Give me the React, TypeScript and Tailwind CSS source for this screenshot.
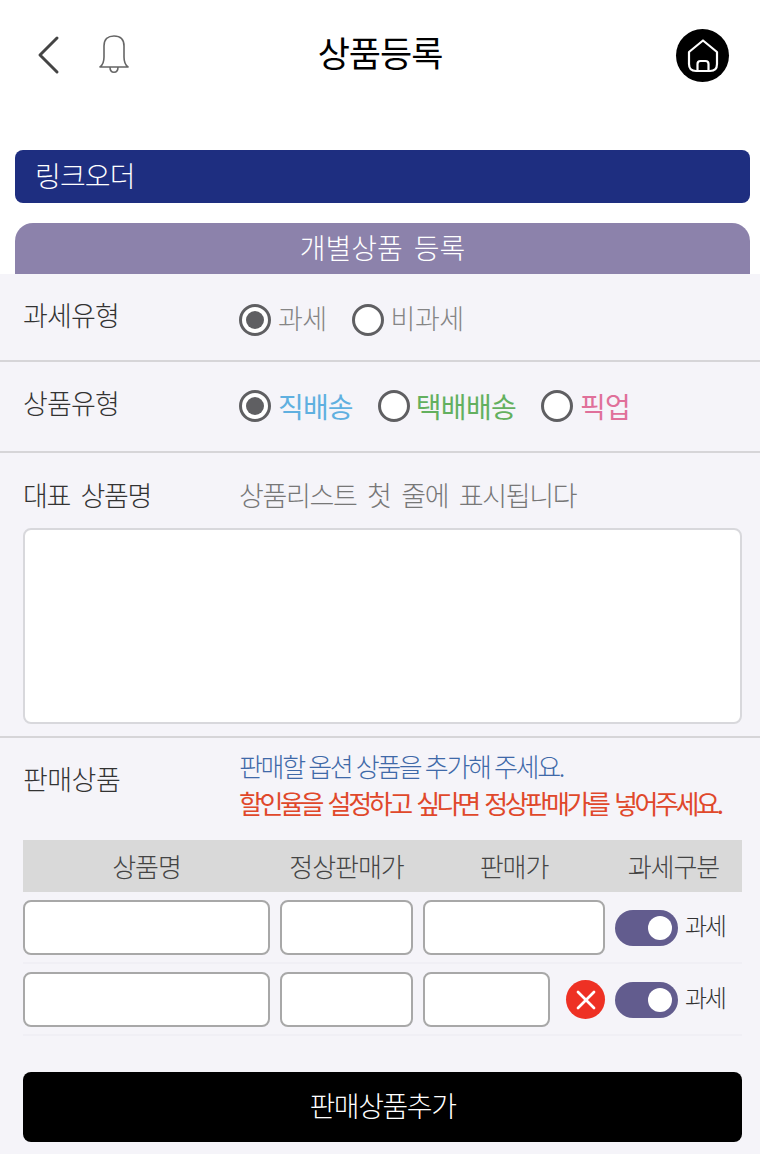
import { X } from 'lucide-react'

const font = "font-['Noto_Sans_CJK_KR','Noto_Sans',sans-serif]"

function Radio({ checked }: { checked?: boolean }) {
  return (
    <span className="flex h-8 w-8 shrink-0 items-center justify-center rounded-full border-[3px] border-[#5f5f62] bg-white">
      {checked && <span className="h-[18px] w-[18px] rounded-full bg-[#5f5f62]" />}
    </span>
  )
}

function Field({ className }: { className: string }) {
  return <div className={`h-[55px] shrink-0 rounded-lg border-2 border-[#a8a8a8] bg-white ${className}`} />
}

function TaxToggle() {
  return (
    <div className="flex items-center">
      <div className="flex h-9 w-[63px] items-center justify-end rounded-full bg-[#625c8e] pr-[6px]">
        <span className="h-6 w-6 rounded-full bg-white" />
      </div>
      <span className="mb-[5px] ml-[7px] text-[24px] font-light tracking-[-0.1em] text-[#333]">과세</span>
    </div>
  )
}

export default function App() {
  return (
    <div className={`${font} h-[1154px] w-[760px] overflow-hidden bg-white`}>
      <header className="relative flex h-[150px] items-start justify-center pt-[28px]">
        <svg viewBox="0 0 24 40" className="absolute left-[36px] top-[35px] h-[40px] w-[24px]" fill="none" stroke="#444" strokeWidth="3" strokeLinecap="round" strokeLinejoin="round">
          <path d="M21 3 L4 20 L21 37" />
        </svg>
        <svg viewBox="0 0 34 40" className="absolute left-[97px] top-[34px] h-[40px] w-[34px]" fill="none" stroke="#666" strokeWidth="1.6" strokeLinejoin="round">
          <path d="M3 33 Q7 30 7 23 V12 C7 5 11 2 17 2 C23 2 27 5 27 12 V23 Q27 30 31 33 Z" />
          <path d="M13 33 C13 40 21 40 21 33" />
        </svg>
        <h1 className="text-[35px] leading-[48px] font-normal tracking-[-0.03em] text-black">상품등록</h1>
        <div className="absolute left-[676px] top-[29px] flex h-[53px] w-[53px] items-center justify-center rounded-full bg-black">
          <svg viewBox="0 0 34 34" className="h-[34px] w-[34px]" fill="none" stroke="white" strokeWidth="2.2" strokeLinejoin="round">
            <path d="M17 1.5 L31 13 V25 Q31 32 24 32 H10 Q3 32 3 25 V13 Z" />
            <path d="M11.5 32 V25 Q11.5 22 14.5 22 H19.5 Q22.5 22 22.5 25 V32" />
          </svg>
        </div>
      </header>

      <div className="ml-[15px] mr-[10px] flex h-[53px] items-center rounded-lg bg-[#1e2e80] pb-[4px] pl-[20px]">
        <span className="text-[28px] font-light tracking-[-0.03em] text-white">링크오더</span>
      </div>

      <div className="ml-[15px] mr-[10px] mt-[20px] flex h-[51px] items-center justify-center rounded-t-[18px] bg-[#8c82ab] pb-[4px]">
        <span className="text-[28px] font-light [word-spacing:5px] text-white">개별상품 등록</span>
      </div>

      <div className="h-[880px] bg-[#f5f4f9]">
        <section className="flex h-[88px] items-start border-b-2 border-[#d6d5d8] pl-[23px] pt-[22px]">
          <span className="w-[216px] text-[27px] leading-[38px] font-light tracking-[-0.03em] text-[#333]">과세유형</span>
          <div className="flex items-center pt-[3px]">
            <Radio checked />
            <span className="mb-[3px] ml-[7px] text-[27px] leading-[38px] font-light tracking-[-0.02em] text-[#858585]">과세</span>
            <span className="ml-[25px]"><Radio /></span>
            <span className="mb-[3px] ml-[7px] text-[27px] leading-[38px] font-light tracking-[-0.02em] text-[#858585]">비과세</span>
          </div>
        </section>

        <section className="flex h-[91px] items-start border-b-2 border-[#d6d5d8] pl-[23px] pt-[22px]">
          <span className="w-[216px] text-[27px] leading-[38px] font-light tracking-[-0.03em] text-[#333]">상품유형</span>
          <div className="flex items-center pt-[3px]">
            <Radio checked />
            <span className="ml-[7px] text-[28px] leading-[38px] font-normal tracking-[-0.03em] text-[#5fb0e0]">직배송</span>
            <span className="ml-[25px]"><Radio /></span>
            <span className="ml-[6px] text-[28px] leading-[38px] font-normal tracking-[-0.025em] text-[#63b05f]">택배배송</span>
            <span className="ml-[25px]"><Radio /></span>
            <span className="ml-[7px] text-[28px] leading-[38px] font-normal tracking-[-0.03em] text-[#e0709a]">픽업</span>
          </div>
        </section>

        <section className="h-[285px] border-b-2 border-[#d6d5d8] pl-[23px] pr-[18px] pt-[23px]">
          <div className="flex">
            <span className="w-[216px] text-[27px] leading-[38px] font-light tracking-[-0.05em] [word-spacing:6px] text-[#333]">대표 상품명</span>
            <span className="text-[27px] leading-[38px] font-light tracking-[-0.05em] [word-spacing:6px] text-[#777]">상품리스트 첫 줄에 표시됩니다</span>
          </div>
          <div className="mt-[14px] h-[196px] rounded-lg border-2 border-[#d8d8dc] bg-white" />
        </section>

        <section className="pl-[23px] pr-[18px]">
          <div className="flex h-[102px] items-start">
            <span className="mt-[22px] w-[216px] text-[27px] leading-[38px] font-light tracking-[-0.02em] text-[#333]">판매상품</span>
            <div className="pt-[9px]">
              <p className="whitespace-nowrap text-[26px] leading-[38px] font-light tracking-[-0.09em] [word-spacing:1px] text-[#3f69a8]">판매할 옵션 상품을 추가해 주세요.</p>
              <p className="whitespace-nowrap text-[26px] leading-[36px] font-normal tracking-[-0.13em] [word-spacing:4px] text-[#e0482b]">할인율을 설정하고 싶다면 정상판매가를 넣어주세요.</p>
            </div>
          </div>

          <div className="grid h-[52px] grid-cols-[247px_10px_133px_10px_182px_137px] items-center bg-[#d9d9d9] pb-[2px] text-center text-[26px] font-light tracking-[-0.04em] text-[#444]">
            <span>상품명</span>
            <span />
            <span>정상판매가</span>
            <span />
            <span>판매가</span>
            <span>과세구분</span>
          </div>

          <div className="flex h-[72px] items-center gap-[10px] border-b-2 border-[#f0eff5] pt-[1px]">
            <Field className="w-[247px]" />
            <Field className="w-[133px]" />
            <Field className="w-[182px]" />
            <TaxToggle />
          </div>

          <div className="flex h-[72px] items-center gap-[10px] border-b-2 border-[#f0eff5] pt-[1px]">
            <Field className="w-[247px]" />
            <Field className="w-[133px]" />
            <Field className="w-[127px]" />
            <span className="ml-[6px] flex h-[39px] w-[39px] items-center justify-center rounded-full bg-[#ee3124]">
              <X className="h-8 w-8 text-white" strokeWidth={2} />
            </span>
            <TaxToggle />
          </div>

          <button className="mt-[36px] flex h-[70px] w-full items-center justify-center rounded-lg bg-black pb-[4px] text-[28px] font-light tracking-[-0.05em] text-white">
            판매상품추가
          </button>
        </section>
      </div>
    </div>
  )
}
